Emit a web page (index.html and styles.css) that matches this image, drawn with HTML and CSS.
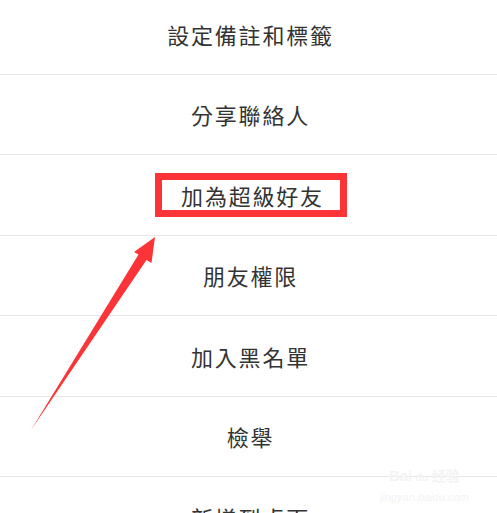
FILE: index.html
```html
<!DOCTYPE html>
<html lang="zh-Hant">
<head>
  <meta charset="UTF-8" />
  <meta name="viewport" content="width=device-width, initial-scale=1.0" />
  <title>聯絡人設定</title>
  <link rel="stylesheet" href="styles.css">
</head>
<body>
  <ul class="menu">
    <li class="menu-item">設定備註和標籤</li>
    <li class="menu-item">分享聯絡人</li>
    <li class="menu-item"><span class="highlight">加為超級好友</span></li>
    <li class="menu-item">朋友權限</li>
    <li class="menu-item">加入黑名單</li>
    <li class="menu-item">檢舉</li>
    <li class="menu-item">新增到桌面</li>
  </ul>

  <svg class="arrow" width="497" height="513" viewBox="0 0 497 513">
    <polygon points="155,237 151.5,263 146.5,260 31,430 138.5,254.5 134,252" fill="#fb3438" />
  </svg>

  <div class="watermark">
    <div class="wm-logo">Bai<span class="wm-du">du</span><span class="wm-cn">经验</span></div>
    <div class="wm-url">jingyan.baidu.com</div>
  </div>
</body>
</html>
```

FILE: styles.css
```css
body {
  margin: 0;
  background-color: #fff;
  font-family: "Noto Sans CJK TC", "Noto Sans CJK SC", sans-serif;
  color: #333;
  overflow: hidden;
  height: 513px;
  position: relative;
}

.menu {
  list-style: none;
  margin: -6px 0 0 0;
  padding: 0;
}

.menu-item {
  height: 79.5px;
  border-bottom: 1px solid #e6e6e6;
  display: flex;
  align-items: center;
  justify-content: center;
  font-size: 22px;
  letter-spacing: 1.8px;
  padding-left: 4px;
}

.highlight {
  display: inline-block;
  border: 7px solid #fb3438;
  padding: 0 16px 0 19px;
  line-height: 30px;
  margin-left: 1px;
}

.arrow {
  position: absolute;
  left: 0;
  top: 0;
  pointer-events: none;
}

.watermark {
  position: absolute;
  left: 380px;
  top: 466px;
  color: #f3f3f3;
  font-family: "Liberation Sans", sans-serif;
  text-align: center;
}

.wm-logo {
  font-size: 15px;
  font-weight: bold;
  line-height: 18px;
}

.wm-du {
  font-size: 11px;
  margin: 0 3px;
}

.wm-cn {
  font-family: "Noto Sans CJK SC", sans-serif;
  font-size: 14px;
}

.wm-url {
  font-size: 11px;
  font-style: italic;
  line-height: 14px;
  margin-top: 4px;
}
```
